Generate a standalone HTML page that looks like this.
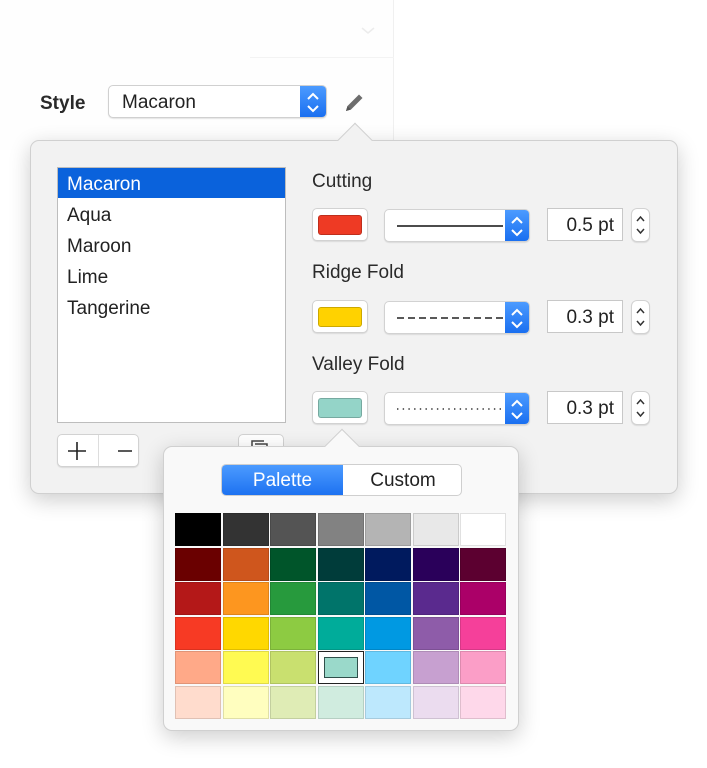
<!DOCTYPE html><html><head><style>
*{box-sizing:border-box;margin:0;padding:0}
body{width:707px;height:768px;background:#fff;position:relative;overflow:hidden;font-family:"Liberation Sans",sans-serif;color:#222}
.abs{position:absolute}
.pop{position:absolute;background:#f2f2f2;border:1px solid #d0d0d0;border-radius:9px;box-shadow:0 6px 22px rgba(0,0,0,.2)}
.arrow{position:absolute;width:26px;height:26px;transform:rotate(45deg);border-left:1px solid #d0d0d0;border-top:1px solid #d0d0d0}
.lbl{position:absolute;font-size:19px;color:#2a2a2a}
.sw{position:absolute;width:56px;height:33px;background:#fff;border:1px solid #d2d2d2;border-radius:5px;box-shadow:0 1px 1px rgba(0,0,0,.1)}
.sw i{position:absolute;left:5px;top:6px;width:44px;height:20px;border-radius:3px;border:1px solid rgba(0,0,0,.2)}
.pu{position:absolute;width:146px;height:33px;background:#fff;border:1px solid #d2d2d2;border-radius:5px;box-shadow:0 1px 1px rgba(0,0,0,.1);overflow:hidden}
.pu .b{position:absolute;right:0;top:0;width:24px;height:100%;background:linear-gradient(#4c9bff,#1a6ff0)}
.num{position:absolute;width:76px;height:33px;background:#fff;border:1px solid #c8c8c8;font-size:19px;text-align:right;padding:6px 8px 0 0}
.st{position:absolute;width:19px;height:34px;background:#fff;border:1px solid #d2d2d2;border-radius:6px;box-shadow:0 1px 1px rgba(0,0,0,.1)}
.grid{position:absolute;left:175px;top:513px;display:grid;grid-template-columns:repeat(7,46px);grid-auto-rows:33px;gap:1.5px}
.grid div{border:1px solid rgba(0,0,0,.12)}
</style></head><body>
<div class="abs" style="left:0;top:0;width:394px;height:150px;background:#fefefe;border-right:1px solid #f0f0f0"></div>
<div class="abs" style="left:250px;top:57px;width:144px;height:1px;background:#f3f3f3"></div>
<svg class="abs" style="left:360px;top:26px" width="16" height="10"><path d="M2 2l6 5 6-5" stroke="#ececec" stroke-width="1.5" fill="none"/></svg>
<div class="abs" style="left:40px;top:93px;font-size:19px;font-weight:bold;color:#2a2a2a">Style</div>
<div class="abs" style="left:108px;top:85px;width:219px;height:33px;background:#fff;border:1px solid #d0d0d0;border-radius:5px;box-shadow:0 1px 1px rgba(0,0,0,.1);overflow:hidden">
<span class="abs" style="left:13px;top:6px;font-size:19px">Macaron</span>
<div class="abs" style="right:0;top:0;width:26px;height:100%;background:linear-gradient(#4c9bff,#1a6ff0)"><svg width="26" height="33"><path d="M8 13l5-5 5 5M8 20l5 5 5-5" stroke="#fff" stroke-width="2" fill="none"/></svg></div></div>
<svg class="abs" style="left:343px;top:91px" width="24" height="24"><path d="M3 20l1.5-5L16 3.5l3.5 3.5L8 18.5z" fill="#6d6d6d"/><path d="M3 20l1.5-5 3.5 3.5z" fill="#555"/></svg>

<div class="pop" style="left:30px;top:140px;width:648px;height:354px"></div>
<div class="arrow" style="left:342px;top:128px;background:#f2f2f2"></div>
<div class="abs" style="left:330px;top:141px;width:52px;height:14px;background:#f2f2f2"></div>

<div class="abs" style="left:57px;top:167px;width:229px;height:256px;background:#fff;border:1px solid #bdbdbd"></div>
<div class="abs" style="left:58px;top:168px;width:227px;height:30px;background:#0a62dc"></div>
<div class="abs" style="left:67px;top:169px;font-size:19px;line-height:31px;color:#222">
<div style="color:#fff">Macaron</div><div>Aqua</div><div>Maroon</div><div>Lime</div><div>Tangerine</div></div>
<div class="abs" style="left:57px;top:434px;width:82px;height:33px;background:#fff;border:1px solid #d2d2d2;border-radius:5px;box-shadow:0 1px 1px rgba(0,0,0,.1)">
<div class="abs" style="left:40px;top:0;width:1px;height:31px;background:#ddd"></div>
<svg class="abs" style="left:8px;top:5px" width="66" height="22"><path d="M11 2v18M2 11h18M52 11h18" stroke="#222" stroke-width="1.6"/></svg></div>
<div class="abs" style="left:238px;top:434px;width:46px;height:33px;background:#fff;border:1px solid #d2d2d2;border-radius:5px"></div>
<svg class="abs" style="left:250px;top:439px" width="20" height="12"><path d="M2 11V2h12M5 5h12v6" stroke="#444" stroke-width="1.5" fill="none"/></svg>

<div class="lbl" style="left:312px;top:171px">Cutting</div>
<div class="lbl" style="left:312px;top:262px">Ridge Fold</div>
<div class="lbl" style="left:312px;top:354px">Valley Fold</div>

<div class="sw" style="left:312px;top:208px"><i style="background:#ee3a24"></i></div>
<div class="sw" style="left:312px;top:300px"><i style="background:#ffd200"></i></div>
<div class="sw" style="left:312px;top:391px"><i style="background:#94d4c8"></i></div>

<div class="pu" style="left:384px;top:209px"><svg class="abs" style="left:12px;top:15px" width="106" height="2"><path d="M0 1h106" stroke="#111" stroke-width="1.4"/></svg><div class="b"><svg width="24" height="33"><path d="M7 13l5-5 5 5M7 20l5 5 5-5" stroke="#fff" stroke-width="2" fill="none"/></svg></div></div>
<div class="pu" style="left:384px;top:301px"><svg class="abs" style="left:12px;top:15px" width="106" height="2"><path d="M0 1h106" stroke="#222" stroke-width="1.4" stroke-dasharray="7 4"/></svg><div class="b"><svg width="24" height="33"><path d="M7 13l5-5 5 5M7 20l5 5 5-5" stroke="#fff" stroke-width="2" fill="none"/></svg></div></div>
<div class="pu" style="left:384px;top:392px"><svg class="abs" style="left:12px;top:15px" width="106" height="2"><path d="M0 1h106" stroke="#333" stroke-width="1.4" stroke-dasharray="1.4 4.3"/></svg><div class="b"><svg width="24" height="33"><path d="M7 13l5-5 5 5M7 20l5 5 5-5" stroke="#fff" stroke-width="2" fill="none"/></svg></div></div>

<div class="num" style="left:547px;top:208px">0.5 pt</div>
<div class="num" style="left:547px;top:300px">0.3 pt</div>
<div class="num" style="left:547px;top:391px">0.3 pt</div>
<div class="st" style="left:631px;top:208px"><svg width="17" height="32"><path d="M5 12l3.5-4 3.5 4M5 20l3.5 4 3.5-4" stroke="#333" stroke-width="1.5" fill="none"/></svg></div>
<div class="st" style="left:631px;top:300px"><svg width="17" height="32"><path d="M5 12l3.5-4 3.5 4M5 20l3.5 4 3.5-4" stroke="#333" stroke-width="1.5" fill="none"/></svg></div>
<div class="st" style="left:631px;top:391px"><svg width="17" height="32"><path d="M5 12l3.5-4 3.5 4M5 20l3.5 4 3.5-4" stroke="#333" stroke-width="1.5" fill="none"/></svg></div>

<div class="pop" style="left:163px;top:446px;width:356px;height:285px;background:#f9f9f9"></div>
<div class="arrow" style="left:329px;top:434px;background:#f9f9f9"></div>
<div class="abs" style="left:318px;top:447px;width:50px;height:14px;background:#f9f9f9"></div>

<div class="abs" style="left:221px;top:464px;width:241px;height:32px;border:1px solid #cfcfcf;border-radius:5px;background:#fff;overflow:hidden;font-size:19px">
<div class="abs" style="left:0;top:0;width:121px;height:32px;background:linear-gradient(#4c9bff,#1a6ff0);color:#fff;text-align:center;padding-top:5px">Palette</div>
<div class="abs" style="left:121px;top:0;width:120px;height:32px;text-align:center;padding-top:5px;color:#222">Custom</div></div>

<div class="grid">
<div style="background:#000"></div><div style="background:#333"></div><div style="background:#545454"></div><div style="background:#828282"></div><div style="background:#b4b4b4"></div><div style="background:#e8e8e8"></div><div style="background:#fff"></div>
<div style="background:#6a0000"></div><div style="background:#cf561d"></div><div style="background:#00552a"></div><div style="background:#003c3a"></div><div style="background:#001a5e"></div><div style="background:#2a005a"></div><div style="background:#5c0030"></div>
<div style="background:#b41818"></div><div style="background:#fd961f"></div><div style="background:#279a3d"></div><div style="background:#00746a"></div><div style="background:#0057a4"></div><div style="background:#5a2a8e"></div><div style="background:#ab0068"></div>
<div style="background:#f73a24"></div><div style="background:#ffd800"></div><div style="background:#8dcb42"></div><div style="background:#00ac9a"></div><div style="background:#0099e2"></div><div style="background:#8e5ca9"></div><div style="background:#f5409a"></div>
<div style="background:#ffa988"></div><div style="background:#fffa52"></div><div style="background:#c9e06f"></div><div style="background:#fff;border:1px solid #222;padding:5px 5px"><div style="width:100%;height:100%;background:#9ad9ca;border:1.5px solid #2f4f4a"></div></div><div style="background:#6fd3ff"></div><div style="background:#c7a0d0"></div><div style="background:#fb9ec7"></div>
<div style="background:#ffdccd"></div><div style="background:#fffebf"></div><div style="background:#dfecb5"></div><div style="background:#d0ecdf"></div><div style="background:#bde8fd"></div><div style="background:#ebdcef"></div><div style="background:#fed8ea"></div>
</div>
</body></html>
